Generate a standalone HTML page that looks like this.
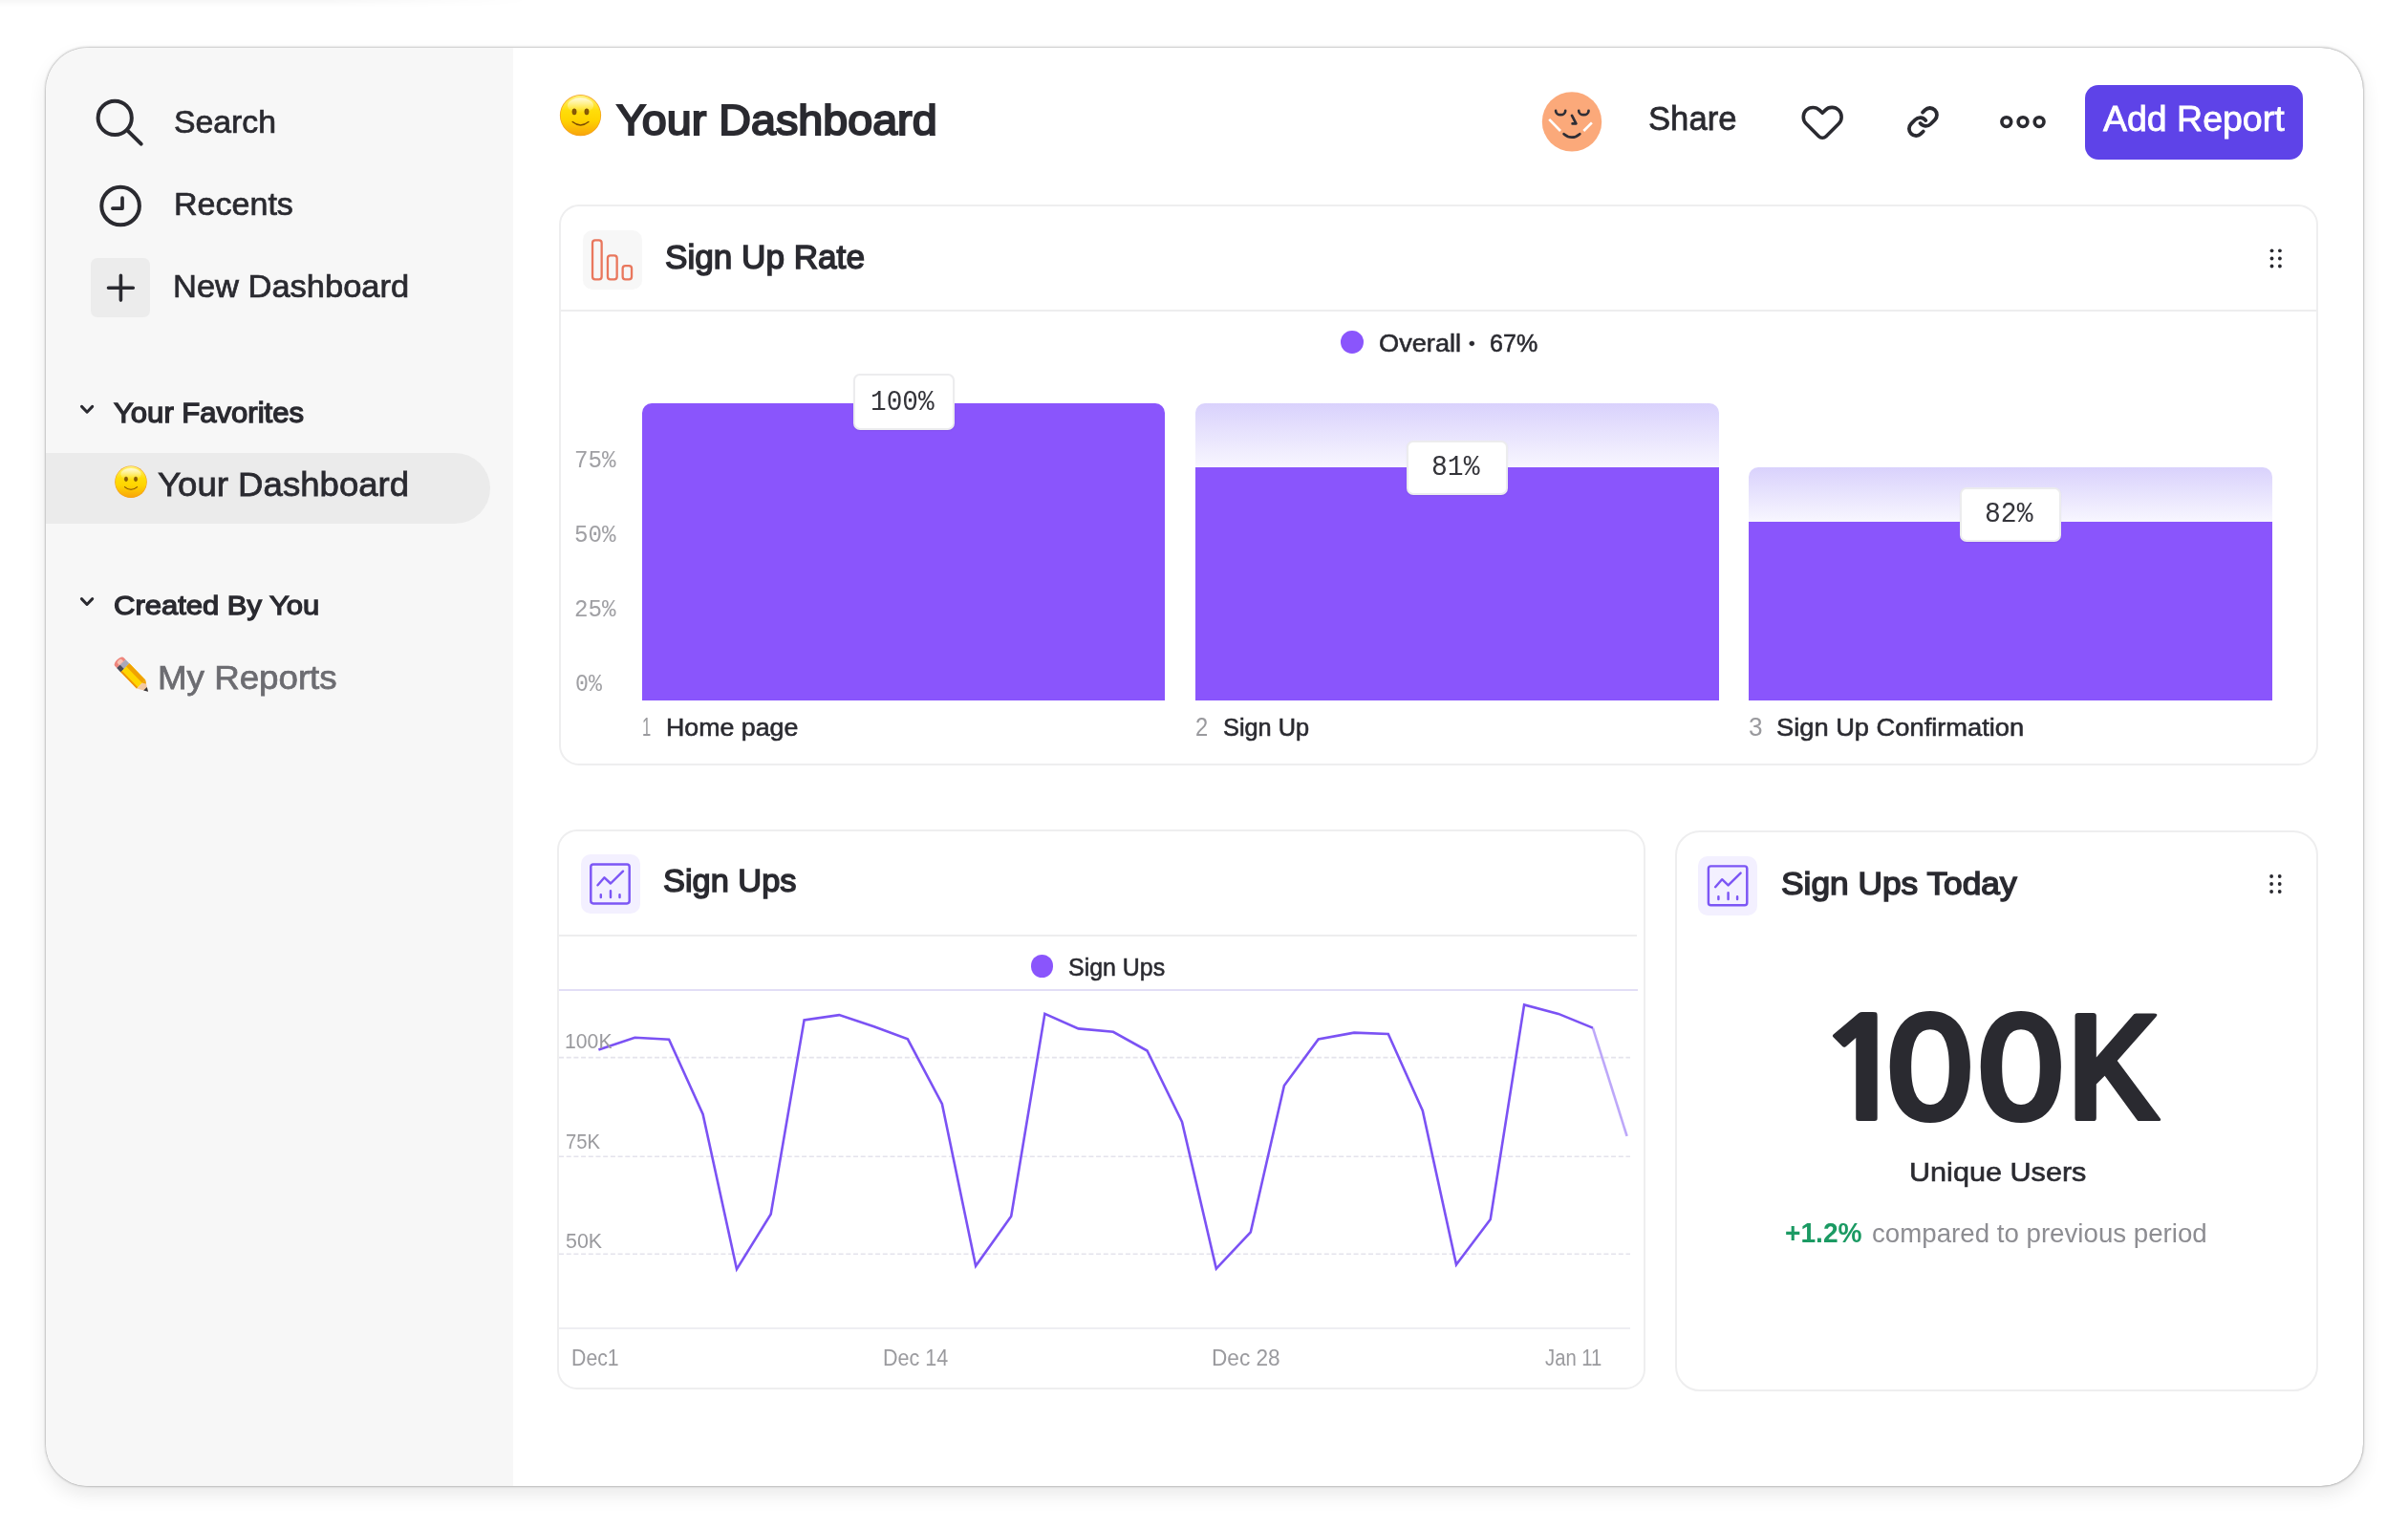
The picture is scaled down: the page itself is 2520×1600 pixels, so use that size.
<!DOCTYPE html>
<html lang="en">
<head>
<meta charset="utf-8">
<title>Your Dashboard</title>
<style>
html,body{margin:0;padding:0;background:#fff}
body{width:2520px;height:1600px;position:relative;overflow:hidden;font-family:"Liberation Sans",sans-serif;color:#2a2a30}
.win{position:absolute;left:48px;top:49.5px;width:2425px;height:1505.5px;border-radius:44px;background:#fff;overflow:hidden;
 box-shadow:0 0 3px rgba(0,0,0,.40),0 0 1px rgba(0,0,0,.25),0 9px 20px rgba(0,0,0,.085)}
.side{position:absolute;left:0;top:0;width:489px;height:1506px;background:#f7f7f7}
.sel{position:absolute;left:0;top:424px;width:465px;height:74px;border-radius:0 37px 37px 0;background:#ebebeb}
.abs{position:absolute}
.t{position:absolute;white-space:nowrap;line-height:1;transform-origin:0 0}
.m{font-family:"Liberation Mono",monospace}
.n{font-family:"NanumGothic","Liberation Sans",sans-serif}
.card{position:absolute;box-sizing:border-box;border:2px solid #eeeeef;border-radius:21px;background:#fff}
.hl{position:absolute;height:2px;background:#ededee}
.ib{position:absolute;width:62px;height:62px;border-radius:10px}
.bar{position:absolute;background:#8a55fc}
.fade{position:absolute;border-radius:10px 10px 0 0;background:linear-gradient(180deg,rgba(124,98,245,.29),rgba(124,98,245,.055))}
.lbl{position:absolute;box-sizing:border-box;background:#fff;border:2px solid #ececee;border-radius:7px;box-shadow:0 1px 2px rgba(0,0,0,.06)}
svg{position:absolute;left:0;top:0;overflow:visible}
</style>
</head>
<body>
<div class="win"><div class="side"><div class="sel"></div></div></div>
<div class="abs topband" style="left:0;top:0;width:560px;height:7px;background:linear-gradient(180deg,rgba(0,0,0,.035),rgba(0,0,0,0));-webkit-mask-image:linear-gradient(90deg,#000 60%,transparent);mask-image:linear-gradient(90deg,#000 60%,transparent)"></div>
<!-- cards -->
<div class="card" style="left:585px;top:214px;width:1840.5px;height:587px"></div>
<div class="hl" style="left:587px;top:324px;width:1836.5px"></div>
<div class="card" style="left:583px;top:867.5px;width:1138.5px;height:586.5px"></div>
<div class="hl" style="left:585px;top:977.5px;width:1128px"></div>
<div class="hl" style="left:585px;top:1034.5px;width:1129px;background:#e2def6"></div>
<div class="card" style="left:1753px;top:869px;width:672.5px;height:587.2px;border-radius:26px"></div>

<!-- icon boxes -->
<div class="ib" style="left:95px;top:270px;background:#ececec;border-radius:7px"></div>
<div class="ib" style="left:609.7px;top:240.7px;background:#f7f7f7"></div>
<div class="ib" style="left:607.5px;top:893.7px;background:#f3f0ff"></div>
<div class="ib" style="left:1777.2px;top:895.8px;width:62.3px;height:62.5px;background:#f3f0ff"></div>

<!-- button -->
<div class="abs" style="left:2182px;top:88.7px;width:228.3px;height:78.2px;border-radius:14px;background:#5e43e8"></div>

<!-- funnel bars -->
<div class="bar" style="left:672px;top:422.3px;width:547.2px;height:310.6px;border-radius:10px 10px 0 0"></div>
<div class="fade" style="left:1251px;top:422.3px;width:547.5px;height:66.6px"></div>
<div class="bar" style="left:1251px;top:488.6px;width:547.5px;height:244.3px"></div>
<div class="fade" style="left:1830.2px;top:489px;width:547.6px;height:57px"></div>
<div class="bar" style="left:1830.2px;top:545.8px;width:547.6px;height:187.1px"></div>
<div class="lbl" style="left:893px;top:391.2px;width:105.9px;height:58.6px"></div>
<div class="lbl" style="left:1471.9px;top:460.7px;width:105.8px;height:57.7px"></div>
<div class="lbl" style="left:2050.9px;top:509.9px;width:105.8px;height:57.3px"></div>

<!-- legend dots -->
<div class="abs" style="left:1403px;top:345.9px;width:23.8px;height:23.8px;border-radius:50%;background:#8a55fc"></div>
<div class="abs" style="left:1078.5px;top:999.1px;width:23.6px;height:23.6px;border-radius:50%;background:#8a55fc"></div>

<svg width="2520" height="1600" viewBox="0 0 2520 1600">
<defs>
<linearGradient id="sg" x1="0" y1="0" x2="0" y2="1"><stop offset="0" stop-color="#fff27a"/><stop offset=".38" stop-color="#ffdd0a"/><stop offset=".62" stop-color="#ffd400"/><stop offset="1" stop-color="#f8a50c"/></linearGradient>
<linearGradient id="sgh" x1="0" y1="0" x2="0" y2="1"><stop offset="0" stop-color="#fffbe0" stop-opacity=".95"/><stop offset="1" stop-color="#fff59a" stop-opacity="0"/></linearGradient>
</defs>
<!-- search -->
<g fill="none" stroke="#2a2a30" stroke-width="4" stroke-linecap="round">
<circle cx="120.2" cy="123.4" r="17.6"/><path d="M133.2 136.4L147.7 150.7"/>
<circle cx="126.1" cy="215.5" r="19.8"/><path d="M128 207.2V218.1H117.9" stroke-width="3.7" stroke-linejoin="round"/>
<path d="M113.5 301.2H139.3M126.4 288.3V314.1" stroke-width="3.6"/>
</g>
<g fill="none" stroke="#2a2a30" stroke-width="3" stroke-linecap="round" stroke-linejoin="round">
<path d="M85.5 425.4L91.1 431.2L96.7 425.4"/><path d="M85.4 626.6L91 632.5L96.7 626.6"/>
</g>
<g transform="translate(607.5 120.7) scale(1.0800)">
<circle r="20" fill="#f3a01c"/>
<circle r="19.3" fill="url(#sg)"/>
<ellipse cx="0" cy="-9.6" rx="12.6" ry="7.4" fill="url(#sgh)"/>
<ellipse cx="-6" cy="-3.5" rx="2" ry="2.9" fill="#8a5a06" stroke="#6b4303" stroke-width=".5"/><ellipse cx="6" cy="-3.5" rx="2" ry="2.9" fill="#8a5a06" stroke="#6b4303" stroke-width=".5"/>
<path d="M-7.7 6.3Q0 12.6 7.8 6.3" fill="none" stroke="#7a4b03" stroke-width="1.3" stroke-linecap="round"/>
</g>
<g transform="translate(137 504.3) scale(0.8400)">
<circle r="20" fill="#f3a01c"/>
<circle r="19.3" fill="url(#sg)"/>
<ellipse cx="0" cy="-9.6" rx="12.6" ry="7.4" fill="url(#sgh)"/>
<ellipse cx="-6" cy="-3.5" rx="2" ry="2.9" fill="#8a5a06" stroke="#6b4303" stroke-width=".5"/><ellipse cx="6" cy="-3.5" rx="2" ry="2.9" fill="#8a5a06" stroke="#6b4303" stroke-width=".5"/>
<path d="M-7.7 6.3Q0 12.6 7.8 6.3" fill="none" stroke="#7a4b03" stroke-width="1.3" stroke-linecap="round"/>
</g>
<!-- pencil -->
<g transform="translate(138.8 707) rotate(46)">
<path d="M-17 -6.4H-20.4A2.8 6.4 0 0 0 -20.4 6.4H-17Z" fill="#ee857c"/>
<path d="M-17.4 -3.4H-20.6A1.6 3 0 0 0 -20.6 2.4H-17.4Z" fill="#f8c3b4"/>
<rect x="-17.2" y="-6.4" width="6" height="12.8" fill="#a9a8b8"/>
<rect x="-17.2" y="1.6" width="6" height="4.8" fill="#4c4c58"/>
<rect x="-11.4" y="-6.4" width="24" height="12.8" fill="#ffd600"/>
<rect x="-11.4" y="-6.4" width="24" height="4.6" fill="#f0a202"/>
<rect x="-11.4" y="4.6" width="24" height="1.8" fill="#ee8e0a"/>
<path d="M12.6 -6.4L23.1 0L12.6 6.4Z" fill="#f3c8a2"/>
<path d="M12.6 -6.4L16 -4.3L12.6 -1.8Z" fill="#f0a202"/>
<path d="M19 -2.5L23.4 0L19 2.5Z" fill="#35353b"/>
</g>
<!-- avatar -->
<g transform="translate(1645 127.4)">
<circle r="31.2" fill="#fba97a"/>
<g fill="none" stroke="#2e2e36" stroke-width="2.7" stroke-linecap="round" stroke-linejoin="round">
<path d="M-16.9 -11.5a5.05 4.3 0 0 0 10.1 0"/><path d="M7.2 -11.5a5.15 4.3 0 0 0 10.3 0"/>
<path d="M0 -6.5L4.4 2L0.6 2"/><path d="M-8.4 12.8Q0 19.8 8.3 12.8"/>
</g>
<g stroke="#fff" stroke-width="2.6"><path d="M-23.8 -2.5L-12 9.6"/><path d="M20.9 0.9L12.3 9.6"/></g>
</g>
<!-- heart, link, dots -->
<g fill="none" stroke="#2a2a30" stroke-width="3.6" stroke-linecap="round" stroke-linejoin="round">
<path d="M1907.2 118.28L1904.29 115.36A9.95 9.95 0 1 0 1890.21 129.44L1903.45 142.67A5.3 5.3 0 0 0 1910.95 142.67L1924.19 129.44A9.95 9.95 0 1 0 1910.11 115.36Z"/>
<g transform="translate(1994.9 110) scale(1.46)" stroke-width="2.6"><path d="M10 13a5 5 0 0 0 7.54.54l3-3a5 5 0 0 0-7.07-7.07l-1.72 1.71"/><path d="M14 11a5 5 0 0 0-7.54-.54l-3 3a5 5 0 0 0 7.07 7.07l1.71-1.71"/></g>
<g stroke-width="3.6"><circle cx="2099.8" cy="127.6" r="4.9"/><circle cx="2117" cy="127.6" r="4.9"/><circle cx="2134.1" cy="127.6" r="4.9"/></g>
</g>
<!-- drag handles -->
<g fill="#2a2a30">
<circle cx="2377.5" cy="262.3" r="1.9"/><circle cx="2377.5" cy="270.5" r="1.9"/><circle cx="2377.5" cy="278.5" r="1.9"/><circle cx="2385.9" cy="262.3" r="1.9"/><circle cx="2385.9" cy="270.5" r="1.9"/><circle cx="2385.9" cy="278.5" r="1.9"/>
<circle cx="2377.1" cy="917" r="1.9"/><circle cx="2377.1" cy="925" r="1.9"/><circle cx="2377.1" cy="933" r="1.9"/><circle cx="2385.7" cy="917" r="1.9"/><circle cx="2385.7" cy="925" r="1.9"/><circle cx="2385.7" cy="933" r="1.9"/>
</g>
<!-- bars icon -->
<g fill="none" stroke="#e9775d" stroke-width="2.3">
<rect x="620.05" y="251.45" width="9.6" height="40.9" rx="2.8"/><rect x="635.95" y="267.35" width="9.7" height="25" rx="2.8"/><rect x="651.65" y="278.05" width="9.4" height="14.3" rx="2.8"/>
</g>
<g transform="translate(607.6 893.9)" fill="none" stroke="#7c56f5" stroke-width="2.45" stroke-linecap="round" stroke-linejoin="round">
<rect x="10.7" y="10.6" width="40.4" height="40.9" rx="2.6"/>
<polyline points="17.9,32.4 24.9,24.4 31.4,30.6 44.4,17.8"/>
<path d="M21.2 42.4V45.2M31.4 38.4V45.2M40.9 42.4V45.2"/></g>
<g transform="translate(1777.2 895.8)" fill="none" stroke="#7c56f5" stroke-width="2.45" stroke-linecap="round" stroke-linejoin="round">
<rect x="10.7" y="10.6" width="40.4" height="40.9" rx="2.6"/>
<polyline points="17.9,32.4 24.9,24.4 31.4,30.6 44.4,17.8"/>
<path d="M21.2 42.4V45.2M31.4 38.4V45.2M40.9 42.4V45.2"/></g>
</svg>
<svg width="2520" height="1600" viewBox="0 0 2520 1600">
<g stroke="#e4e3ec" stroke-width="1.6" stroke-dasharray="5 2.7" fill="none">
<line x1="585" y1="1106.6" x2="1706" y2="1106.6"/><line x1="585" y1="1210.2" x2="1706" y2="1210.2"/><line x1="585" y1="1312.2" x2="1706" y2="1312.2"/>
</g>
<line x1="585" y1="1390" x2="1706" y2="1390" stroke="#e9e9ee" stroke-width="1.7"/>
<polyline points="626.4,1098.4 664.4,1085.7 700.1,1087.7 735.6,1165.9 771.0,1328.2 806.7,1270.5 841.6,1067.4 878.2,1062.1 914.7,1074.2 949.9,1087.4 985.9,1155.2 1021.1,1324.8 1058.2,1272.8 1093.4,1060.9 1128.5,1076.4 1165.0,1079.8 1200.5,1099.5 1237.0,1174.0 1272.8,1327.6 1308.8,1289.4 1343.9,1136.0 1379.7,1087.4 1417.1,1080.6 1452.8,1082.0 1488.8,1162.2 1524.0,1323.4 1559.7,1276.1 1595.1,1051.4 1630.9,1060.9 1666.9,1075.6" fill="none" stroke="#7b52f4" stroke-width="2.6" stroke-linejoin="miter" stroke-linecap="butt"/>
<polyline points="1666.9,1075.6 1702.6,1188.9" fill="none" stroke="#7b52f4" stroke-opacity=".5" stroke-width="2.6" />
</svg>
<svg width="2520" height="1600" viewBox="0 0 2520 1600"><text transform="translate(0 1173.0) scale(1.11 1)" x="1712.25 1773.24 1858.83 1945.68" y="0" font-family="NanumGothic,'Liberation Sans',sans-serif" font-weight="800" font-size="147.5" fill="#2a2a30">100K</text></svg>

<span class="t" style="left:182.17px;top:109.63px;font-size:34.0px;transform:scaleX(0.9929);-webkit-text-stroke:0.73px currentColor;">Search</span>
<span class="t" style="left:182.13px;top:197.06px;font-size:33.5px;transform:scaleX(1.0161);-webkit-text-stroke:0.72px currentColor;">Recents</span>
<span class="t" style="left:181.12px;top:282.76px;font-size:33.5px;transform:scaleX(1.0291);-webkit-text-stroke:0.73px currentColor;">New Dashboard</span>
<span class="t" style="left:118.68px;top:417.28px;font-size:29.5px;transform:scaleX(1.0524);-webkit-text-stroke:1.3px currentColor;">Your Favorites</span>
<span class="t" style="left:164.99px;top:488.87px;font-size:35.0px;transform:scaleX(1.0457);-webkit-text-stroke:0.76px currentColor;">Your Dashboard</span>
<span class="t" style="left:118.82px;top:619.23px;font-size:28.5px;transform:scaleX(1.0872);-webkit-text-stroke:1.3px currentColor;">Created By You</span>
<span class="t" style="left:164.66px;top:691.80px;font-size:34.5px;transform:scaleX(1.0640);color:#6c6c71;-webkit-text-stroke:0.75px currentColor;">My Reports</span>
<span class="t" style="left:645.25px;top:104.18px;font-size:44.5px;transform:scaleX(1.0488);-webkit-text-stroke:2.0px currentColor;">Your Dashboard</span>
<span class="t" style="left:1724.59px;top:105.57px;font-size:35.0px;transform:scaleX(0.9903);-webkit-text-stroke:0.76px currentColor;">Share</span>
<span class="t" style="left:2200.61px;top:107.30px;font-size:36.0px;transform:scaleX(1.0410);color:#fff;-webkit-text-stroke:0.8px currentColor;">Add Report</span>
<span class="t" style="left:695.74px;top:251.53px;font-size:34.5px;transform:scaleX(1.0181);-webkit-text-stroke:1.5px currentColor;">Sign Up Rate</span>
<span class="t" style="left:1442.84px;top:346.02px;font-size:26.0px;transform:scaleX(1.0453);-webkit-text-stroke:0.56px currentColor;">Overall</span>
<span class="t" style="left:1537.38px;top:350.31px;font-size:19px;transform:scaleX(1.0119);-webkit-text-stroke:0.28px currentColor;">•</span>
<span class="t" style="left:1558.89px;top:346.02px;font-size:26.0px;transform:scaleX(0.9639);-webkit-text-stroke:0.56px currentColor;">67%</span>
<span class="t m" style="left:601.23px;top:470.42px;font-size:25.5px;transform:scaleX(0.9487);color:#a0a0a4;">75%</span>
<span class="t m" style="left:601.23px;top:547.62px;font-size:25.5px;transform:scaleX(0.9487);color:#a0a0a4;">50%</span>
<span class="t m" style="left:601.23px;top:625.82px;font-size:25.5px;transform:scaleX(0.9487);color:#a0a0a4;">25%</span>
<span class="t m" style="left:602.29px;top:704.02px;font-size:25.5px;transform:scaleX(0.9113);color:#a0a0a4;">0%</span>
<span class="t m" style="left:911.35px;top:406.00px;font-size:30.0px;transform:scaleX(0.9240);color:#34343a;">100%</span>
<span class="t m" style="left:1498.42px;top:474.00px;font-size:30.0px;transform:scaleX(0.9345);color:#34343a;">81%</span>
<span class="t m" style="left:2077.42px;top:523.00px;font-size:30.0px;transform:scaleX(0.9345);color:#34343a;">82%</span>
<span class="t" style="left:671.57px;top:746.83px;font-size:27.5px;transform:scaleX(0.6025);color:#9a9a9e;">1</span>
<span class="t" style="left:697.47px;top:748.39px;font-size:26.5px;transform:scaleX(1.0101);-webkit-text-stroke:0.58px currentColor;">Home page</span>
<span class="t" style="left:1251.14px;top:746.83px;font-size:27.5px;transform:scaleX(0.8638);color:#9a9a9e;">2</span>
<span class="t" style="left:1280.32px;top:748.39px;font-size:26.5px;transform:scaleX(0.9558);-webkit-text-stroke:0.58px currentColor;">Sign Up</span>
<span class="t" style="left:1830.05px;top:746.83px;font-size:27.5px;transform:scaleX(0.9527);color:#9a9a9e;">3</span>
<span class="t" style="left:1859.47px;top:748.39px;font-size:26.5px;transform:scaleX(1.0291);-webkit-text-stroke:0.58px currentColor;">Sign Up Confirmation</span>
<span class="t" style="left:693.55px;top:903.95px;font-size:34.0px;transform:scaleX(1.0112);-webkit-text-stroke:1.5px currentColor;">Sign Ups</span>
<span class="t" style="left:1118.29px;top:999.55px;font-size:25.5px;transform:scaleX(0.9778);-webkit-text-stroke:0.55px currentColor;">Sign Ups</span>
<span class="t" style="left:591.24px;top:1078.58px;font-size:22.5px;transform:scaleX(0.9438);color:#9a9a9e;">100K</span>
<span class="t" style="left:592.30px;top:1184.08px;font-size:22.5px;transform:scaleX(0.9024);color:#9a9a9e;">75K</span>
<span class="t" style="left:592.17px;top:1287.58px;font-size:22.5px;transform:scaleX(0.9511);color:#9a9a9e;">50K</span>
<span class="t" style="left:598.29px;top:1410.43px;font-size:23.5px;transform:scaleX(0.9060);color:#9a9a9e;">Dec1</span>
<span class="t" style="left:923.64px;top:1410.43px;font-size:23.5px;transform:scaleX(0.9163);color:#9a9a9e;">Dec 14</span>
<span class="t" style="left:1267.62px;top:1410.43px;font-size:23.5px;transform:scaleX(0.9627);color:#9a9a9e;">Dec 28</span>
<span class="t" style="left:1616.58px;top:1410.43px;font-size:23.5px;transform:scaleX(0.8625);color:#9a9a9e;">Jan 11</span>
<span class="t" style="left:1863.74px;top:906.85px;font-size:34.0px;transform:scaleX(1.0385);-webkit-text-stroke:1.5px currentColor;">Sign Ups Today</span>
<span class="t" style="left:1997.70px;top:1212.63px;font-size:27.5px;transform:scaleX(1.1129);-webkit-text-stroke:0.59px currentColor;">Unique Users</span>
<span class="t" style="left:1867.83px;top:1275.65px;font-size:29.0px;transform:scaleX(0.9704);font-weight:700;color:#1b9a63;">+1.2%</span>
<span class="t" style="left:1959.19px;top:1276.92px;font-size:27.5px;transform:scaleX(1.0063);color:#8d8d92;">compared to previous period</span>
</body>
</html>
